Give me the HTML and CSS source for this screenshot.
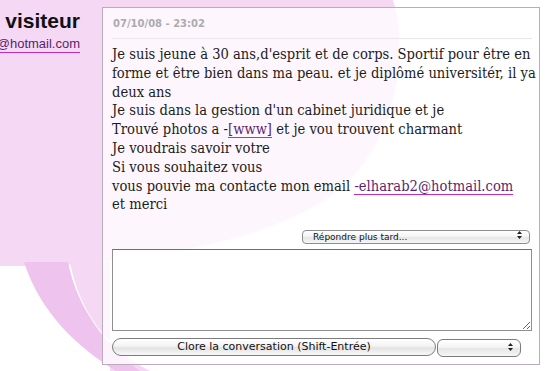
FILE: index.html
```html
<!DOCTYPE html>
<html lang="fr">
<head>
    <meta charset="UTF-8">
    <title>Conversation - visiteur</title>
    <link rel="stylesheet" href="styles.css">
</head>
<body>
    <svg class="backdrop" width="547" height="371" viewBox="0 0 547 371" aria-hidden="true">
        <path class="bubble" d="M0,0 L393,0 C412,60 392,160 322,202 C252,245 120,268 0,266 Z"/>
        <path class="bubble" d="M20,262 L110,262 L110,371 L150,371 C110,350 80,315 70,262 Z"/>
        <path class="bubble-tail" d="M24,262 C40,312 76,346 116,371 L140,371 C108,346 78,312 68,262 Z"/>
    </svg>

    <div class="page">
        <div class="sender">
            <div class="sender-name">visiteur</div>
            <div class="sender-mail"><a href="#">elharab2@hotmail.com</a></div>
        </div>

        <div class="panel">
            <div class="stamp">07/10/08 - 23:02</div>

            <div class="message">
                Je suis jeune à 30 ans,d'esprit et de corps. Sportif pour être en forme et être bien dans ma peau. et je diplômé universitér, il ya deux ans<br>
                Je suis dans la gestion d'un cabinet juridique et je<br>
                Trouvé photos a -<a href="#">[www]</a> et je vou trouvent charmant<br>
                Je voudrais savoir votre<br>
                Si vous souhaitez vous<br>
                vous pouvie ma contacte mon email <a href="#" class="nowrap">-elharab2@hotmail.com</a><br>
                et merci
            </div>

            <div class="reply-bar">
                <span class="popup popup-later">
                    <select>
                        <option>Répondre plus tard...</option>
                    </select>
                    <svg class="arrows" width="7" height="10" viewBox="0 0 7 10"><path d="M3.5,1 L6,4 L1,4 Z M1,6 L6,6 L3.5,9 Z"/></svg>
                </span>
            </div>

            <textarea class="reply"></textarea>

            <div class="actions">
                <button class="close-btn">Clore la conversation (Shift-Entrée)</button>
                <span class="popup popup-status">
                    <select>
                        <option></option>
                    </select>
                    <svg class="arrows" width="7" height="10" viewBox="0 0 7 10"><path d="M3.5,1 L6,4 L1,4 Z M1,6 L6,6 L3.5,9 Z"/></svg>
                </span>
            </div>
        </div>
    </div>
</body>
</html>
```

FILE: styles.css
```css
html {
    background: #fff;
}
body {
    margin: 0;
    font-family: "DejaVu Sans", Verdana, sans-serif;
    color: #1a1a1a;
    overflow: hidden;
}
.backdrop {
    position: absolute;
    top: 0;
    left: 0;
    z-index: -1;
}
.bubble { fill: #f4d8f4; }
.bubble-tail { fill: #eec4ee; }

.page {
    display: flex;
    align-items: flex-start;
}
.sender {
    width: 80px;
    flex-shrink: 0;
    padding-top: 9px;
    display: flex;
    flex-direction: column;
    align-items: flex-end;
}
.sender-name {
    font-family: "Liberation Sans", Arial, sans-serif;
    font-weight: bold;
    font-size: 21px;
    line-height: 24px;
    color: #111;
}
.sender-mail {
    display: flex;
    justify-content: flex-end;
    width: 80px;
    margin-top: 3px;
    font-family: "Liberation Sans", Arial, sans-serif;
    font-size: 13px;
    line-height: 16px;
    white-space: nowrap;
}
a {
    color: #5c1f6c;
    text-decoration: none;
    border-bottom: 1px solid #c02cb8;
}
.nowrap {
    white-space: nowrap;
}

.panel {
    margin: 7px 0 0 22px;
    width: 420px;
    height: 348px;
    padding: 8px 7px 0 9px;
    border: 1px solid #bcabbc;
    background: rgba(255, 255, 255, 0.8);
}
.stamp {
    font-size: 10px;
    font-weight: bold;
    color: #ababab;
    line-height: 14px;
    padding: 1px 0 7px 1px;
    border-bottom: 1px solid #ede5ed;
}
.message {
    margin: 6px -5px 0 0;
    font-family: "DejaVu Serif Condensed", "DejaVu Serif", Georgia, serif;
    font-stretch: condensed;
    font-size: 14.6px;
    line-height: 18.8px;
    color: #1c1c1c;
}

.reply-bar {
    display: flex;
    justify-content: flex-end;
    margin-top: 11px;
    padding-right: 2px;
}
.popup {
    position: relative;
    display: inline-block;
}
.popup select {
    appearance: none;
    -webkit-appearance: none;
    font-family: "DejaVu Sans", Verdana, sans-serif;
    color: #111;
    border: 1px solid #8c8c8c;
    background: linear-gradient(#ffffff, #f4f4f4 45%, #e6e6e6 55%, #f7f7f7);
    outline: none;
}
.popup .arrows {
    position: absolute;
    top: 50%;
    right: 7px;
    margin-top: -5px;
    fill: #222;
    pointer-events: none;
}
.popup-later select {
    width: 228px;
    height: 14px;
    font-size: 9px;
    line-height: 12px;
    padding: 0 0 0 10px;
    border-radius: 4px;
}

.reply {
    display: block;
    box-sizing: border-box;
    width: 420px;
    height: 82px;
    margin-top: 5px;
    border: 1px solid #8e8e8e;
    border-top-color: #6f6f6f;
    background: #fff;
    font-family: "DejaVu Sans", Verdana, sans-serif;
    font-size: 12px;
}

.actions {
    display: flex;
    align-items: center;
    margin-top: 6px;
}
.close-btn {
    width: 324px;
    height: 18px;
    padding: 0;
    font-family: "DejaVu Sans", Verdana, sans-serif;
    font-size: 11px;
    color: #111;
    border: 1px solid #7c7c7c;
    border-radius: 9px;
    background: linear-gradient(#ffffff, #f3f3f3 45%, #e3e3e3 55%, #f8f8f8);
}
.popup-status {
    margin-left: 1px;
}
.popup-status select {
    width: 84px;
    height: 18px;
    border-radius: 6px;
    border-color: #7c7c7c;
}
```
